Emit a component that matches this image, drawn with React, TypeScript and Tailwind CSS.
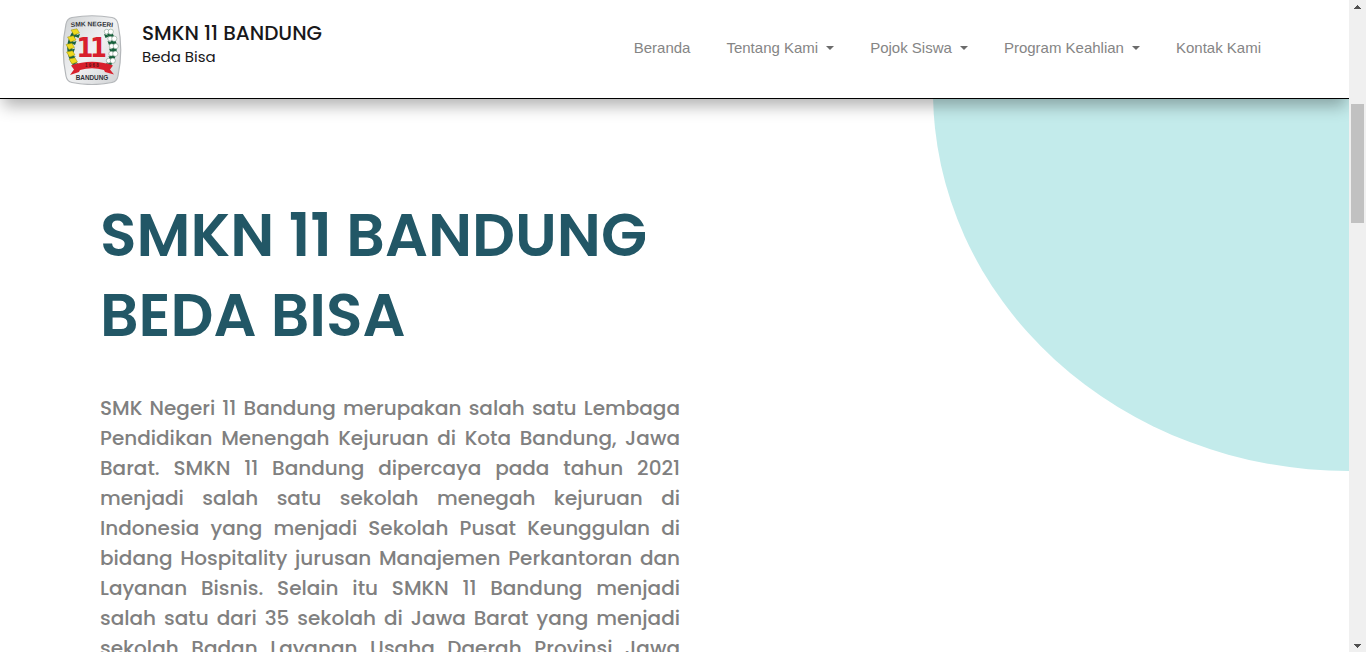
import React from "react";

type NavEntry = { label: string; menu?: boolean };

const navEntries: NavEntry[] = [
  { label: "Beranda" },
  { label: "Tentang Kami", menu: true },
  { label: "Pojok Siswa", menu: true },
  { label: "Program Keahlian", menu: true },
  { label: "Kontak Kami" },
];

const sprigs = [
  [13, 17],
  [9.5, 24],
  [8, 31.5],
  [8.5, 39],
  [11, 46],
];

function SchoolLogo() {
  return (
    <svg viewBox="0 0 60 70" className="h-[70px] w-[60px] shrink-0" role="img" aria-label="Logo SMKN 11 Bandung">
      <defs>
        <linearGradient id="shield" x1="0" y1="0" x2="1" y2="1">
          <stop offset="0" stopColor="#cfd2d4" />
          <stop offset="0.5" stopColor="#f1f2f3" />
          <stop offset="1" stopColor="#cfd1d3" />
        </linearGradient>
        <path id="arch" d="M5 12.8 Q30 9.5 55 12.8" />
      </defs>
      <path
        d="M10 2.5 Q30 -1 50 2.5 Q55 3.5 56 9 Q61.5 35 56 61 Q55 66.5 50 67.5 Q30 71.5 10 67.5 Q5 66.5 4 61 Q-1.5 35 4 9 Q5 3.5 10 2.5Z"
        fill="url(#shield)"
        stroke="#b4b7ba"
        strokeWidth="1.2"
      />
      <text fontFamily="Liberation Sans, sans-serif" fontWeight="700" fontSize="6.6" fill="#303338" textAnchor="middle">
        <textPath href="#arch" startOffset="50%">SMK NEGERI</textPath>
      </text>
      <path d="M14 16 Q2 32 13 49" fill="none" stroke="#17613c" strokeWidth="5" />
      <path d="M46 16 Q58 32 47 49" fill="none" stroke="#17613c" strokeWidth="5" />
      {sprigs.map(([x, y]) => (
        <g key={y}>
          <path d={`M${x - 4} ${y - 2} L${x + 2} ${y - 3.2} L${x + 4.5} ${y + 1} L${x - 1} ${y + 3}Z`} fill="#efd91c" stroke="#9a921c" strokeWidth="0.5" />
          <path d={`M${x - 1} ${y + 4} l6 -2 l-1.5 4z`} fill="#17613c" />
          <circle cx={57.7 - x} cy={y - 0.3} r="2.4" fill="#fff" stroke="#6d8c7b" strokeWidth="0.5" />
          <circle cx={61.8 - x} cy={y - 0.3} r="2.6" fill="#fff" stroke="#6d8c7b" strokeWidth="0.5" />
          <path d={`M${61 - x} ${y + 4} l-6 -2 l1.5 4z`} fill="#17613c" />
        </g>
      ))}
      <g fontFamily="DejaVu Sans Condensed, DejaVu Sans, sans-serif" fontWeight="700" fontSize="27" fill="#d8202c" textAnchor="middle">
        <text x="23" y="42">
          1
        </text>
        <text x="36.5" y="42">
          1
        </text>
      </g>
      <path d="M9 50.5 Q30 43 51 50.5 L48 54.5 L52 59.5 L43 57 L42 55 Q30 51.5 18 55 L17 57 L8 60 L12 54.5Z" fill="#d8202c" />
      <text x="30" y="52.2" fontFamily="Liberation Sans, sans-serif" fontWeight="700" fontSize="4.5" fill="#5d1216" textAnchor="middle">
        1 9 6 8
      </text>
      <text x="30" y="64.5" fontFamily="Liberation Sans, sans-serif" fontWeight="700" fontSize="6.4" fill="#303338" textAnchor="middle">
        BANDUNG
      </text>
    </svg>
  );
}

function Caret() {
  return (
    <svg viewBox="0 0 8 4" className="h-1 w-2" aria-hidden="true">
      <path d="M0 0H8L4 4Z" fill="#6b6b6b" />
    </svg>
  );
}

function Header() {
  return (
    <header className="relative z-10 flex h-[99px] shrink-0 items-center justify-between border-b border-black bg-white pt-0.5 pr-[88px] pl-[62px] shadow-[0_10px_15px_-3px_rgba(0,0,0,0.3)]">
      <a href="#" className="flex items-center gap-5 text-[#18181a]">
        <SchoolLogo />
        <span className="flex flex-col pb-2.5 font-['Poppins','Inter',sans-serif]">
          <span className="text-[20px] leading-6 font-medium">SMKN 11 BANDUNG</span>
          <span className="text-[15px] leading-6">Beda Bisa</span>
        </span>
      </a>
      <nav className="flex items-center gap-9 pb-1 font-['Liberation_Sans',Arial,sans-serif] text-[15px] leading-6 text-[#858585]">
        {navEntries.map(({ label, menu }) =>
          menu ? (
            <button key={label} type="button" aria-haspopup="menu" className="flex items-center gap-2 whitespace-nowrap">
              {label}
              <Caret />
            </button>
          ) : (
            <a key={label} href="#" className="whitespace-nowrap">
              {label}
            </a>
          ),
        )}
      </nav>
    </header>
  );
}

function Scrollbar() {
  return (
    <div className="flex w-[17px] shrink-0 flex-col items-center bg-[#f0f0f0]">
      <button type="button" aria-label="Gulir ke atas" className="flex h-[17px] w-full shrink-0 items-center justify-center">
        <svg viewBox="0 0 7 4" className="mb-1 h-1 w-[7px]" shapeRendering="crispEdges">
          <path d="M0 4V3H1V2H2V1H3V0H4V1H5V2H6V3H7V4Z" fill="#505050" />
        </svg>
      </button>
      <div className="flex w-full grow flex-col items-center pt-[87px]">
        <div className="h-[119px] w-[13px] bg-[#c1c1c1]" />
      </div>
      <button type="button" aria-label="Gulir ke bawah" className="flex h-[17px] w-full shrink-0 items-center justify-center">
        <svg viewBox="0 0 7 4" className="mt-1 h-1 w-[7px]" shapeRendering="crispEdges">
          <path d="M0 0V1H1V2H2V3H3V4H4V3H5V2H6V1H7V0Z" fill="#505050" />
        </svg>
      </button>
    </div>
  );
}

export default function App() {
  return (
    <div className="flex h-screen overflow-hidden bg-white">
      <div className="flex min-w-0 grow flex-col overflow-hidden">
        <Header />
        <main className="relative min-h-0 grow overflow-hidden px-[100px] pt-24 font-['Poppins','Inter',sans-serif]">
          <div className="absolute -top-2 right-0 h-[380px] w-[416px] rounded-bl-[100%] bg-[#c3ebeb]" />
          <div className="relative max-w-[580px]">
            <h1 className="text-[60px] leading-20 font-semibold text-[#225766]">
              SMKN 11 BANDUNG
              <br />
              BEDA BISA
            </h1>
            <p className="mt-[38px] text-justify text-[20px] leading-[30px] font-medium text-[#808080] [text-align-last:justify]">
              SMK Negeri 11 Bandung merupakan salah satu Lembaga Pendidikan Menengah Kejuruan di Kota Bandung, Jawa
              Barat. SMKN 11 Bandung dipercaya pada tahun 2021 menjadi salah satu sekolah menegah kejuruan di Indonesia
              yang menjadi Sekolah Pusat Keunggulan di bidang Hospitality jurusan Manajemen Perkantoran dan Layanan
              Bisnis. Selain itu SMKN 11 Bandung menjadi salah satu dari 35 sekolah di Jawa Barat yang menjadi sekolah
              Badan Layanan Usaha Daerah Provinsi Jawa
            </p>
          </div>
        </main>
      </div>
      <Scrollbar />
    </div>
  );
}
